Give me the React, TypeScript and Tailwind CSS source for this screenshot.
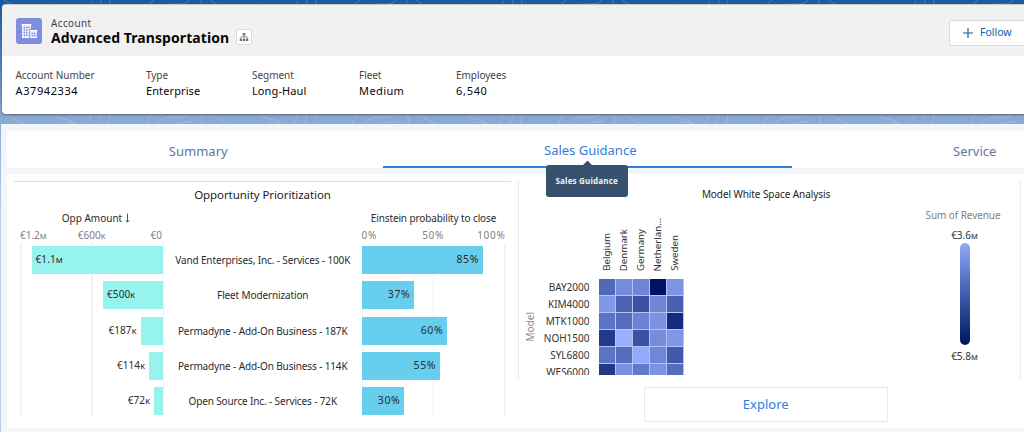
import type { ReactNode } from "react";

type Opportunity = {
  name: string;
  amount: string;
  amountWidth: number;
  probability: number;
  inside: boolean;
};

const fields = [
  { label: "Account Number", value: "A37942334", className: "w-[130.5px]", valueClassName: "tracking-[0.6px]" },
  { label: "Type", value: "Enterprise", className: "w-[106px]", valueClassName: "tracking-[0.1px]" },
  { label: "Segment", value: "Long-Haul", className: "w-[107px]", valueClassName: "tracking-[0.1px]" },
  { label: "Fleet", value: "Medium", className: "w-[97px]", valueClassName: "tracking-[0.4px]" },
  { label: "Employees", value: "6,540", className: "w-[100px]", valueClassName: "tracking-[0.7px]" },
];

const opportunities: Opportunity[] = [
  { name: "Vand Enterprises, Inc. - Services - 100K", amount: "€1.1M", amountWidth: 131, probability: 85, inside: true },
  { name: "Fleet Modernization", amount: "€500K", amountWidth: 59.5, probability: 37, inside: true },
  { name: "Permadyne - Add-On Business - 187K", amount: "€187K", amountWidth: 22, probability: 60, inside: false },
  { name: "Permadyne - Add-On Business - 114K", amount: "€114K", amountWidth: 13.5, probability: 55, inside: false },
  { name: "Open Source Inc. - Services - 72K", amount: "€72K", amountWidth: 8.5, probability: 30, inside: false },
];

const countries = ["Belgium", "Denmark", "Germany", "Netherlan...", "Sweden"];

const models = [
  { name: "BAY2000", cells: ["#5068b8", "#758bdb", "#7085d5", "#021164", "#7e95e5"] },
  { name: "KIM4000", cells: ["#8198e8", "#4b62b3", "#3a50a2", "#7085d5", "#4a60b0"] },
  { name: "MTK1000", cells: ["#5b73c5", "#566dbe", "#6c83d4", "#7b92e1", "#162a80"] },
  { name: "NOH1500", cells: ["#233989", "#9bb1ff", "#3b51a1", "#758cdb", "#8097e7"] },
  { name: "SYL6800", cells: ["#5b73c3", "#556dbd", "#93aafb", "#6f87d7", "#4259aa"] },
  { name: "WES6000", cells: ["#233988", "#7b92e2", "#627aca", "#7c93e3", "#566dbe"] },
];

// The last letter is the magnitude suffix and is set as a small cap.
function Amount({ value }: { value: string }) {
  return (
    <>
      {value.slice(0, -1)}
      <span className="text-[7.5px] font-medium">{value.slice(-1)}</span>
    </>
  );
}

function Contours({ className }: { className: string }) {
  return (
    <svg className={className} viewBox="0 0 1024 14" fill="none" stroke="#fff" strokeOpacity="0.22" strokeWidth="0.9">
      {[0, 206, 412, 618, 824].map((x) => (
        <g key={x} transform={`translate(${x} 0)`}>
          <path d="M4 0Q20 10 30 14M55 4l18 4M62 9l12 1M60 14l16-4M92 1Q90 8 84 14M101 0Q101 8 96 14M110 0Q110 8 107 14" />
          <path d="M146 14Q147 4 154 0M155 14Q161 3 174 4T190 0M200 0Q205 7 200 14M170 14Q180 8 192 8" />
        </g>
      ))}
    </svg>
  );
}

function AccountIcon() {
  return (
    <svg viewBox="0 0 26 26" className="size-[26px]">
      <rect width="26" height="26" rx="3" fill="#7f8de1" />
      <path fill="#fff" d="M6 6.3h9v4.6h-1.8v9H6zM14.3 12.4h6.5v7.5h-6.5zM5.4 6h10.2v1H5.4zM13.7 12h7.7v1h-7.7z" />
      <path
        stroke="#7f8de1"
        strokeWidth="0.65"
        d="M8.4 7.5v11.3M10.8 7.5v11.3M13.1 7.5v3.2M6.6 9.7h8M6.6 12.2h6.2M6.6 14.7h6.2M6.6 17.2h6.2M16.4 13.5v5.6M18.7 13.5v5.6M15 15.4h5.3M15 17.6h5.3"
      />
    </svg>
  );
}

function HierarchyIcon() {
  return (
    <svg viewBox="0 0 10 10" className="size-[10px] shrink-0" fill="#747474">
      <rect x="3.6" y="0.9" width="2.9" height="2.6" rx="0.5" />
      <path d="M4.7 3.4h.7v1.2h3.1v1.8h-.7V5.3H5.4v1.1h-.7V5.3H2.3v1.1h-.7V4.6h3.1z" />
      <rect x="0.7" y="6.5" width="2.4" height="2.4" rx="0.5" />
      <rect x="3.8" y="6.5" width="2.4" height="2.4" rx="0.5" />
      <rect x="6.9" y="6.5" width="2.4" height="2.4" rx="0.5" />
    </svg>
  );
}

function RecordHeader() {
  return (
    <header className="relative ml-[2px] h-[110px] shrink-0 overflow-hidden rounded-l-[4px] border-t border-[#c9c9c9] bg-white shadow-[0_1px_2px_rgba(60,60,60,0.6)]">
      <div className="flex h-[51px] items-start bg-[#f1f1f1] pl-[13.5px]">
        <div className="pt-[13px]">
          <AccountIcon />
        </div>
        <div className="pt-[11px] pl-[9.5px]">
          <p className="text-[10px] leading-[14px] tracking-[0.35px] text-[#444]">Account</p>
          <h1 className="text-[14px] leading-[15px] font-bold tracking-[0.08px] whitespace-nowrap text-[#080707]">
            Advanced Transportation
          </h1>
        </div>
        <button className="mt-[24px] ml-[7px] flex size-[16px] items-center justify-center rounded-[3px] border border-[#dddbda] bg-white">
          <HierarchyIcon />
        </button>
        <button className="mt-[15px] ml-auto flex h-[26px] w-[75px] shrink-0 items-center gap-[7px] rounded-l-[3px] border border-r-0 border-[#dddbda] bg-white pl-[13px] text-[10.5px] text-[#0b5cab]">
          <svg viewBox="0 0 10 10" className="size-[10px]" stroke="#0b5cab" strokeWidth="1.2">
            <path d="M5 0v10M0 5h10" />
          </svg>
          Follow
        </button>
      </div>
      <dl className="flex pt-[13px] pl-[13.5px]">
        {fields.map((field) => (
          <div key={field.label} className={field.className}>
            <dt className="text-[10px] leading-[13.5px] tracking-[-0.05px] whitespace-nowrap text-[#444]">{field.label}</dt>
            <dd className={`text-[11px] leading-[15px] whitespace-nowrap text-[#080707] ${field.valueClassName}`}>
              {field.value}
            </dd>
          </div>
        ))}
      </dl>
    </header>
  );
}

function Tabs() {
  return (
    <nav className="flex h-[37px] shrink-0 bg-white text-[13px] leading-[41px] text-[#61789b]">
      <div className="w-[375.5px] pl-[7px] text-center">Summary</div>
      <div className="relative w-[409.5px] border-b-2 border-[#2f7ddb] pl-[6px] text-center leading-[39px] text-[#2f7ddb]">
        Sales Guidance
        <div className="absolute top-[34px] left-[163px] z-10 h-[32px] w-[82.5px] rounded-[3px] bg-[#36506e] text-[8px] leading-[32px] font-bold tracking-[0.2px] text-[#eef2f6]">
          <span className="absolute -top-[3px] left-[38px] size-[7px] rotate-45 bg-[#36506e]" />
          <span className="relative">Sales Guidance</span>
        </div>
      </div>
      <div className="flex-1 pl-[161px]">Service</div>
    </nav>
  );
}

function Axis({ children }: { children: ReactNode }) {
  return <div className="flex h-[14px] justify-between text-[10px] leading-[14px] text-[#807f7f]">{children}</div>;
}

function GridLines() {
  return (
    <div className="absolute inset-x-0 -top-[3px] -bottom-[2px] flex justify-between">
      <span className="w-[1.5px] bg-[#eff2f6]" />
      <span className="w-[1.5px] bg-[#eff2f6]" />
      <span className="w-[1.5px] bg-[#eff2f6]" />
    </div>
  );
}

function OpportunityChart() {
  return (
    <section className="w-[511px] shrink-0 pt-[7px] pl-[7px]">
      <h2 className="mr-[7px] h-[28px] border-t border-[#d8dde6] text-center text-[11.5px] leading-[26px] tracking-[-0.08px] text-[#222]">
        Opportunity Prioritization
      </h2>
      <div className="flex pt-[2px] pl-[5px] text-[10px] text-[#2b2b2b]">
        <div className="w-[145px]">
          <h3 className="flex items-center justify-center gap-[3px] pl-[9px] leading-[14px]">
            Opp Amount
            <svg viewBox="0 0 5 10" className="h-[10px] w-[5px]" fill="none" stroke="#444" strokeWidth="0.9">
              <path d="M2.5 0.5v8.6M0.7 7.2l1.8 2 1.8-2" />
            </svg>
          </h3>
          <div className="pt-[3px] pl-[1px]">
            <Axis>
              <span><Amount value="€1.2M" /></span>
              <span className="pr-[14px]"><Amount value="€600K" /></span>
              <span className="pr-[2px]">€0</span>
            </Axis>
          </div>
          <div className="relative mt-[4px] ml-px">
            <GridLines />
            <div className="relative flex flex-col gap-[7.3px] pr-[1.5px]">
              {opportunities.map((item) => (
                <div key={item.name} className="flex h-[28px] items-center justify-end leading-[27px]">
                  {!item.inside && (
                    <span className="pr-[4px] tracking-[0.1px]"><Amount value={item.amount} /></span>
                  )}
                  <div className="h-full bg-[#97f3ee] pl-[4px] tracking-[0.1px]" style={{ width: item.amountWidth }}>
                    {item.inside && <Amount value={item.amount} />}
                  </div>
                </div>
              ))}
            </div>
          </div>
        </div>
        <div className="flex w-[197.5px] flex-col gap-[7.3px] pt-[35px] text-center tracking-[-0.13px]">
          {opportunities.map((item) => (
            <div key={item.name} className="h-[28px] leading-[28px] whitespace-nowrap">{item.name}</div>
          ))}
        </div>
        <div className="w-[144px]">
          <h3 className="text-center leading-[14px] tracking-[-0.12px] whitespace-nowrap">Einstein probability to close</h3>
          <div className="pt-[3px] tracking-[0.7px]">
            <Axis>
              <span>0%</span>
              <span className="pl-[12px]">50%</span>
              <span>100%</span>
            </Axis>
          </div>
          <div className="relative mt-[4px]">
            <GridLines />
            <div className="relative flex flex-col gap-[7.3px]">
              {opportunities.map((item) => (
                <div
                  key={item.name}
                  className="h-[28px] bg-[#68ceee] pr-[4px] text-right text-[10.5px] leading-[27px] tracking-[0.6px]"
                  style={{ width: item.probability * 1.43 }}
                >
                  {item.probability}%
                </div>
              ))}
            </div>
          </div>
        </div>
      </div>
    </section>
  );
}

function WhiteSpaceAnalysis() {
  return (
    <section className="flex-1 pt-[7px] text-[10px] text-[#333]">
      <div className="h-[200px] w-[503px] border-x border-[#e9edf3]">
        <h2 className="h-[27px] pr-[7px] text-center leading-[26px] tracking-[-0.08px] text-[#222]">
          Model White Space Analysis
        </h2>
        <div className="flex">
          <div className="flex w-[24.5px] flex-col items-center pt-[104px] pr-[2px] text-[#8a8a8a]">
            <span className="rotate-180 leading-[14px] [writing-mode:vertical-rl]">Model</span>
          </div>
          <div className="h-[167px] w-[141px] overflow-hidden">
            <div className="flex h-[71px] items-end pb-[8px] pl-[54px]">
              {countries.map((country) => (
                <span key={country} className="w-[17px] rotate-180 text-[9.7px] leading-[17px] [writing-mode:vertical-rl]">
                  {country}
                </span>
              ))}
            </div>
            {models.map((model) => (
              <div key={model.name} className="flex h-[17px]">
                <span className="w-[55px] pr-[9px] text-right leading-[17px]">{model.name}</span>
                {model.cells.map((color, i) => (
                  <span key={i} className="w-[17px] border-r border-b border-[#b5c3f2]" style={{ backgroundColor: color }} />
                ))}
              </div>
            ))}
          </div>
          <div className="ml-auto flex w-[114px] flex-col items-center leading-[14px]">
            <span className="tracking-[-0.08px] text-[#807f7f]">Sum of Revenue</span>
            <span className="pt-[6px] pl-[3px]"><Amount value="€3.6M" /></span>
            <span className="ml-[3px] h-[102px] w-[10px] rounded-full bg-linear-to-b from-[#93aafb] to-[#021164]" />
            <span className="pt-[4px] pl-[3px]"><Amount value="€5.8M" /></span>
          </div>
        </div>
      </div>
      <button className="mt-[6px] ml-[125.5px] block h-[34.5px] w-[244.5px] border border-[#e6e9ee] text-[13px] leading-[33px] text-[#2f7ddb]">
        Explore
      </button>
    </section>
  );
}

export default function App() {
  return (
    <div className="relative flex h-[432px] w-[1024px] flex-col overflow-hidden bg-linear-to-b from-[#175c9f] via-[#86a8d0] via-[27%] to-[#bccdea] to-[50%] pt-[4px] font-['Noto_Sans',sans-serif]">
      <Contours className="absolute top-0 left-0 h-[14px] w-[1024px]" />
      <Contours className="absolute top-[113px] left-0 h-[14px] w-[1024px]" />
      <RecordHeader />
      <main className="relative mt-[10px] ml-[1px] flex h-[304px] shrink-0 flex-col bg-[#f2f5fa] pt-[7px] pl-[6px] shadow-[0_4px_0_#f2f5fa]">
        <Tabs />
        <div className="mt-[6px] flex h-[254px] bg-white">
          <OpportunityChart />
          <WhiteSpaceAnalysis />
        </div>
      </main>
    </div>
  );
}
